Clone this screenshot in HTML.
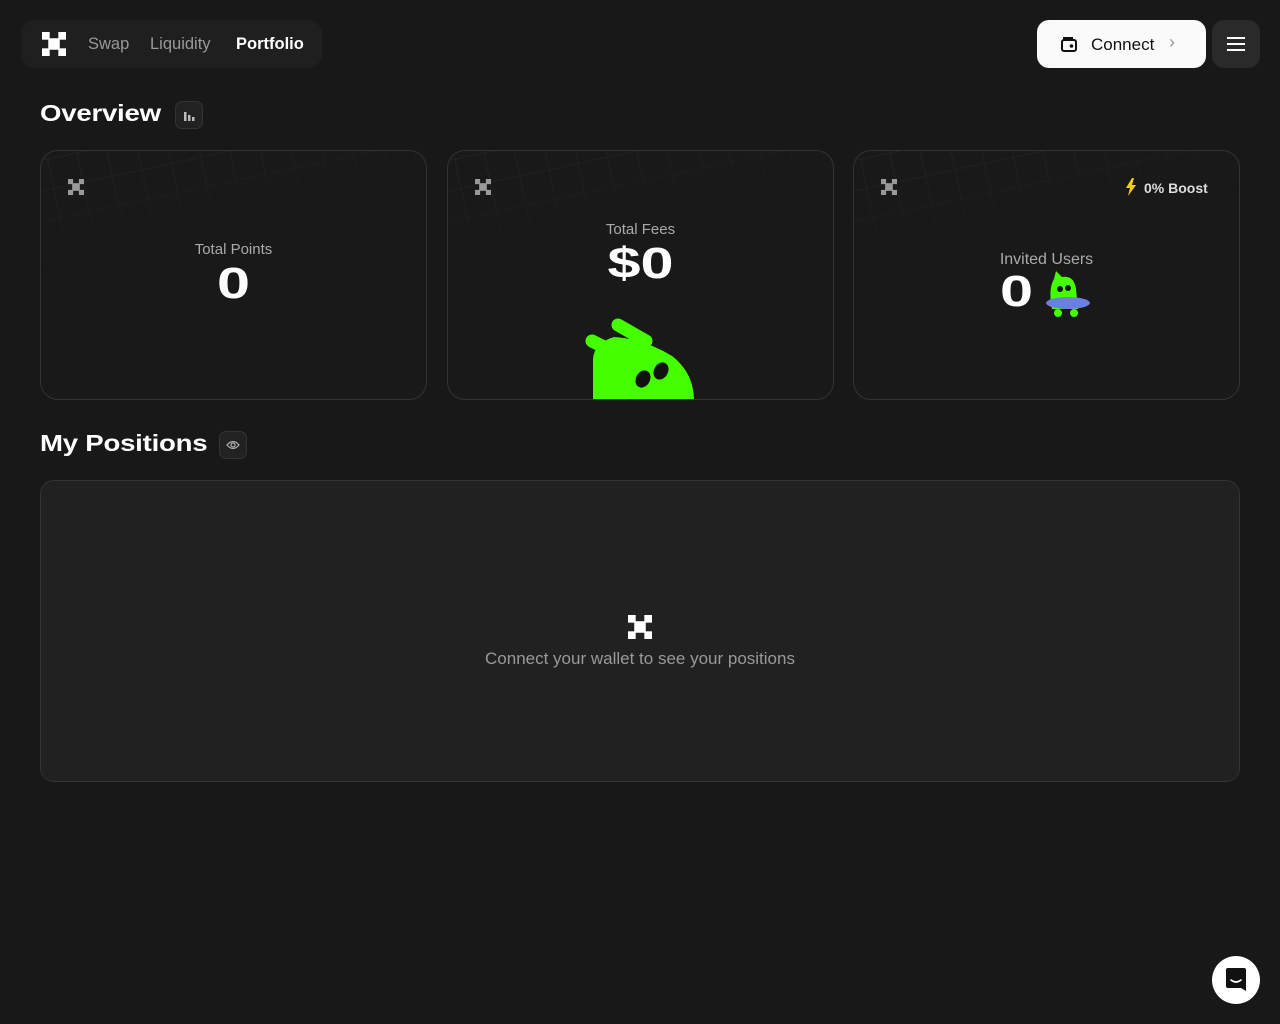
<!DOCTYPE html>
<html><head><style>
body{margin:0;width:1280px;height:1024px;background:#181818;font-family:"Liberation Sans",sans-serif;color:#fff;position:relative;overflow:hidden}
.abs{position:absolute}
.nav{left:21px;top:20px;width:301px;height:48px;background:#1f1f1f;border-radius:14px}
.nav span{position:absolute;top:15px;font-size:16.5px;color:#999}
.h{font-size:23px;font-weight:bold;letter-spacing:-0.2px;transform:scaleX(1.2);transform-origin:left}
.ib{width:28px;height:28px;border:1px solid #333;border-radius:7px;background:#222;box-sizing:border-box}
.card{top:150px;width:387px;height:250px;border:1px solid #333;border-radius:18px;box-sizing:border-box;background:#191919;overflow:hidden}
.grid{position:absolute;left:-40px;top:0;right:-40px;height:110px;background-image:linear-gradient(#242424 1px,transparent 1px),linear-gradient(90deg,#242424 1px,transparent 1px);background-size:30px 30px;transform:rotate(-12deg) translateY(-30px);-webkit-mask-image:linear-gradient(#000,transparent)}
.lbl{position:absolute;width:100%;text-align:center;font-size:15px;color:#aaa}
.big{position:absolute;width:100%;text-align:center;font-size:44px;font-weight:bold;color:#fff;transform:scaleX(1.35)}
</style></head><body>
<div class="abs nav">
 <svg class="abs" style="left:21px;top:12px" width="24" height="24" viewBox="0 0 5 5"><g fill="#fff"><rect x="0" y="0" width="1.6" height="1.6"/><rect x="3.4" y="0" width="1.6" height="1.6"/><rect x="1.3" y="1.3" width="2.4" height="2.4"/><rect x="0" y="3.4" width="1.6" height="1.6"/><rect x="3.4" y="3.4" width="1.6" height="1.6"/></g></svg>
 <span style="left:67px">Swap</span><span style="left:129px">Liquidity</span><span style="left:215px;color:#fff;font-weight:bold">Portfolio</span>
</div>
<div class="abs" style="left:1037px;top:20px;width:169px;height:48px;background:#fafafa;border-radius:12px">
 <svg class="abs" style="left:23px;top:15px" width="18" height="18" viewBox="0 0 18 18" fill="none" stroke="#111" stroke-width="2"><rect x="2" y="5" width="14" height="11" rx="2"/><path d="M4 5V3h8v2"/><circle cx="11.5" cy="11" r=".8" fill="#111"/></svg>
 <span class="abs" style="left:54px;top:15px;font-size:17px;color:#111">Connect</span>
 <span class="abs" style="left:132px;top:12px;font-size:18px;color:#999">›</span>
</div>
<div class="abs" style="left:1212px;top:20px;width:48px;height:48px;background:#2a2a2a;border-radius:12px">
 <div class="abs" style="left:15px;top:17px;width:18px;height:2px;background:#fff;box-shadow:0 6px #fff,0 12px #fff"></div>
</div>
<div class="abs h" style="left:40px;top:100px">Overview</div>
<div class="abs ib" style="left:175px;top:101px"><svg class="abs" style="left:7px;top:7px" width="13" height="13" viewBox="0 0 13 13" fill="#bbb"><rect x="1" y="3" width="2.5" height="9"/><rect x="5" y="6" width="2.5" height="6"/><rect x="9" y="8" width="2.5" height="4"/></svg></div>

<div class="abs card" style="left:40px"><div class="grid"></div>
 <svg class="abs" style="left:27px;top:28px" width="16" height="16" viewBox="0 0 5 5"><g fill="#999"><rect x="0" y="0" width="1.6" height="1.6"/><rect x="3.4" y="0" width="1.6" height="1.6"/><rect x="1.3" y="1.3" width="2.4" height="2.4"/><rect x="0" y="3.4" width="1.6" height="1.6"/><rect x="3.4" y="3.4" width="1.6" height="1.6"/></g></svg>
 <div class="lbl" style="top:90px">Total Points</div><div class="big" style="top:108px">0</div></div>
<div class="abs card" style="left:447px"><div class="grid"></div>
 <svg class="abs" style="left:27px;top:28px" width="16" height="16" viewBox="0 0 5 5"><g fill="#999"><rect x="0" y="0" width="1.6" height="1.6"/><rect x="3.4" y="0" width="1.6" height="1.6"/><rect x="1.3" y="1.3" width="2.4" height="2.4"/><rect x="0" y="3.4" width="1.6" height="1.6"/><rect x="3.4" y="3.4" width="1.6" height="1.6"/></g></svg>
 <div class="lbl" style="top:70px">Total Fees</div><div class="big" style="top:88px">$0</div>
 <svg class="abs" style="left:136px;top:160px" width="112" height="90" viewBox="0 0 112 90"><path d="M9 90 L9 48 Q10 32 30 26 Q60 28 88 45 Q110 62 110 90Z" fill="#44ff00"/><path d="M8 30 L32 42 M34 14 L62 30" stroke="#44ff00" stroke-width="13" stroke-linecap="round" fill="none"/><ellipse cx="59" cy="68" rx="7" ry="9" fill="#111" transform="rotate(30 59 68)"/><ellipse cx="77" cy="60" rx="7" ry="9" fill="#111" transform="rotate(30 77 60)"/></svg>
</div>
<div class="abs card" style="left:853px"><div class="grid"></div>
 <svg class="abs" style="left:27px;top:28px" width="16" height="16" viewBox="0 0 5 5"><g fill="#999"><rect x="0" y="0" width="1.6" height="1.6"/><rect x="3.4" y="0" width="1.6" height="1.6"/><rect x="1.3" y="1.3" width="2.4" height="2.4"/><rect x="0" y="3.4" width="1.6" height="1.6"/><rect x="3.4" y="3.4" width="1.6" height="1.6"/></g></svg>
 <svg class="abs" style="left:271px;top:27px" width="12" height="18" viewBox="0 0 12 18"><path d="M7 0 L1 10 H5 L3 18 L11 7 H7 L9 0Z" fill="#f5d000"/></svg>
 <span class="abs" style="left:290px;top:29px;font-size:14px;font-weight:bold;color:#ddd">0% Boost</span>
 <div class="lbl" style="top:100px;font-size:16px">Invited Users</div>
 <div class="abs" style="left:146px;top:116px;font-size:44px;font-weight:bold;transform:scaleX(1.35);transform-origin:left">0</div>
 <svg class="abs" style="left:192px;top:118px" width="46" height="50" viewBox="0 0 46 50"><path d="M6 40 Q2 20 8 10 L10 2 L16 8 Q28 6 30 20 L32 40Z" fill="#44ff00"/><circle cx="14" cy="20" r="3" fill="#111"/><circle cx="22" cy="19" r="3" fill="#111"/><ellipse cx="22" cy="34" rx="22" ry="6" fill="#6a7fe0"/><circle cx="12" cy="44" r="4" fill="#44ff00"/><circle cx="28" cy="44" r="4" fill="#44ff00"/></svg>
</div>

<div class="abs h" style="left:40px;top:430px">My Positions</div>
<div class="abs ib" style="left:219px;top:431px"><svg class="abs" style="left:6px;top:8px" width="14" height="10" viewBox="0 0 14 10" fill="none" stroke="#aaa" stroke-width="1.3"><path d="M1 5 Q7 -2 13 5 Q7 12 1 5Z"/><circle cx="7" cy="5" r="2"/></svg></div>
<div class="abs" style="left:40px;top:480px;width:1200px;height:302px;background:#212121;border:1px solid #333;border-radius:14px;box-sizing:border-box">
 <svg class="abs" style="left:587px;top:134px" width="24" height="24" viewBox="0 0 5 5"><g fill="#fff"><rect x="0" y="0" width="1.6" height="1.6"/><rect x="3.4" y="0" width="1.6" height="1.6"/><rect x="1.3" y="1.3" width="2.4" height="2.4"/><rect x="0" y="3.4" width="1.6" height="1.6"/><rect x="3.4" y="3.4" width="1.6" height="1.6"/></g></svg>
 <div class="abs" style="left:0;width:100%;top:168px;text-align:center;font-size:17px;color:#999">Connect your wallet to see your positions</div>
</div>
<div class="abs" style="left:1212px;top:956px;width:48px;height:48px;border-radius:50%;background:#fff">
 <svg class="abs" style="left:14px;top:12px" width="20" height="23" viewBox="0 0 20 23"><path d="M2 0h16a2 2 0 0 1 2 2v21l-5-3H2a2 2 0 0 1-2-2V2a2 2 0 0 1 2-2z" fill="#111"/><path d="M5 12 Q10 16 15 12" stroke="#fff" stroke-width="1.6" fill="none" stroke-linecap="round"/></svg>
</div>
</body></html>
